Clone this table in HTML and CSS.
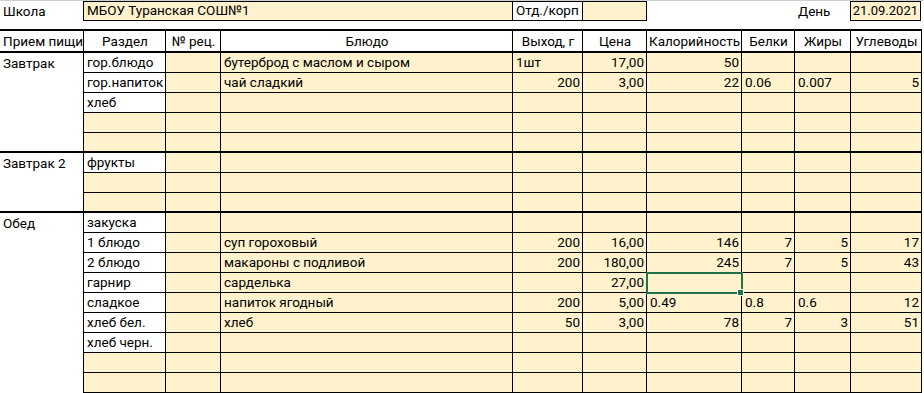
FILE: index.html
```html
<!DOCTYPE html>
<html lang="ru">
<head>
<meta charset="utf-8">
<title>Меню</title>
<link rel="stylesheet" href="styles.css">
</head>
<body>
<div class="sheet">
  <div class="toprow">
    <div class="c">Школа</div>
    <div class="c box tan span3">МБОУ Туранская СОШ№1</div>
    <div class="c box">Отд./корп</div>
    <div class="c box tan"></div>
    <div class="c"></div>
    <div class="c"></div>
    <div class="c">День</div>
    <div class="c box tan r date">21.09.2021</div>
  </div>
  <div class="gap"></div>
  <div class="grid">
    <div class="c hd">Прием пищи</div>
    <div class="c hd ctr">Раздел</div>
    <div class="c hd ctr">№ рец.</div>
    <div class="c hd ctr">Блюдо</div>
    <div class="c hd ctr">Выход, г</div>
    <div class="c hd ctr">Цена</div>
    <div class="c hd ctr">Калорийность</div>
    <div class="c hd ctr">Белки</div>
    <div class="c hd ctr">Жиры</div>
    <div class="c hd ctr last">Углеводы</div>

    <div class="c meal s5 top">Завтрак</div>
    <div class="c">гор.блюдо</div><div class="c tan"></div><div class="c tan">бутерброд с маслом и сыром</div><div class="c tan">1шт</div><div class="c tan r">17,00</div><div class="c tan r">50</div><div class="c tan"></div><div class="c tan"></div><div class="c tan last"></div>
    <div class="c">гор.напиток</div><div class="c tan"></div><div class="c tan">чай сладкий</div><div class="c tan r">200</div><div class="c tan r">3,00</div><div class="c tan r">22</div><div class="c tan">0.06</div><div class="c tan">0.007</div><div class="c tan r last">5</div>
    <div class="c">хлеб</div><div class="c tan"></div><div class="c tan"></div><div class="c tan"></div><div class="c tan"></div><div class="c tan"></div><div class="c tan"></div><div class="c tan"></div><div class="c tan last"></div>
    <div class="c tan"></div><div class="c tan"></div><div class="c tan"></div><div class="c tan"></div><div class="c tan"></div><div class="c tan"></div><div class="c tan"></div><div class="c tan"></div><div class="c tan last"></div>
    <div class="c tan e"></div><div class="c tan e"></div><div class="c tan e"></div><div class="c tan e"></div><div class="c tan e"></div><div class="c tan e"></div><div class="c tan e"></div><div class="c tan e"></div><div class="c tan e last"></div>

    <div class="c meal s3">Завтрак 2</div>
    <div class="c">фрукты</div><div class="c tan"></div><div class="c tan"></div><div class="c tan"></div><div class="c tan"></div><div class="c tan"></div><div class="c tan"></div><div class="c tan"></div><div class="c tan last"></div>
    <div class="c tan"></div><div class="c tan"></div><div class="c tan"></div><div class="c tan"></div><div class="c tan"></div><div class="c tan"></div><div class="c tan"></div><div class="c tan"></div><div class="c tan last"></div>
    <div class="c tan e"></div><div class="c tan e"></div><div class="c tan e"></div><div class="c tan e"></div><div class="c tan e"></div><div class="c tan e"></div><div class="c tan e"></div><div class="c tan e"></div><div class="c tan e last"></div>

    <div class="c meal s9">Обед</div>
    <div class="c">закуска</div><div class="c tan"></div><div class="c tan"></div><div class="c tan"></div><div class="c tan"></div><div class="c tan"></div><div class="c tan"></div><div class="c tan"></div><div class="c tan last"></div>
    <div class="c">1 блюдо</div><div class="c tan"></div><div class="c tan">суп гороховый</div><div class="c tan r">200</div><div class="c tan r">16,00</div><div class="c tan r">146</div><div class="c tan r">7</div><div class="c tan r">5</div><div class="c tan r last">17</div>
    <div class="c">2 блюдо</div><div class="c tan"></div><div class="c tan">макароны с подливой</div><div class="c tan r">200</div><div class="c tan r">180,00</div><div class="c tan r">245</div><div class="c tan r">7</div><div class="c tan r">5</div><div class="c tan r last">43</div>
    <div class="c">гарнир</div><div class="c tan"></div><div class="c tan">сарделька</div><div class="c tan"></div><div class="c tan r">27,00</div><div class="c tan sel"><span class="selbox"></span><span class="handle"></span></div><div class="c tan"></div><div class="c tan"></div><div class="c tan last"></div>
    <div class="c">сладкое</div><div class="c tan"></div><div class="c tan">напиток ягодный</div><div class="c tan r">200</div><div class="c tan r">5,00</div><div class="c tan">0.49</div><div class="c tan">0.8</div><div class="c tan">0.6</div><div class="c tan r last">12</div>
    <div class="c">хлеб бел.</div><div class="c tan"></div><div class="c tan">хлеб</div><div class="c tan r">50</div><div class="c tan r">3,00</div><div class="c tan r">78</div><div class="c tan r">7</div><div class="c tan r">3</div><div class="c tan r last">51</div>
    <div class="c">хлеб черн.</div><div class="c tan"></div><div class="c tan"></div><div class="c tan"></div><div class="c tan"></div><div class="c tan"></div><div class="c tan"></div><div class="c tan"></div><div class="c tan last"></div>
    <div class="c tan"></div><div class="c tan"></div><div class="c tan"></div><div class="c tan"></div><div class="c tan"></div><div class="c tan"></div><div class="c tan"></div><div class="c tan"></div><div class="c tan last"></div>
    <div class="c tan"></div><div class="c tan"></div><div class="c tan"></div><div class="c tan"></div><div class="c tan"></div><div class="c tan"></div><div class="c tan"></div><div class="c tan"></div><div class="c tan last"></div>
  </div>
</div>
</body>
</html>
```

FILE: styles.css
```css
* { box-sizing: border-box; }
html, body {
  margin: 0;
  padding: 0;
  background: #ffffff;
  overflow: hidden;
}
.sheet {
  width: 924px;
  height: 393px;
  overflow: hidden;
  font-family: Roboto, "Liberation Sans", sans-serif;
  font-size: 13.5px;
  color: #000;
  border-top: 1px solid #cfcfcf;
}
.toprow, .grid {
  display: grid;
  grid-template-columns: 84px 82px 55px 292px 70px 64px 95px 53px 56px 70px;
}
.toprow {
  height: 20px;
}
.toprow .c {
  border: none;
}
.toprow .box {
  border: 1px solid #000;
  margin-left: -1px;
}
.toprow .span3 {
  grid-column: span 3;
}
.toprow .date {
  padding-left: 0;
  padding-right: 2px;
  font-size: 13px;
}
.gap {
  height: 8px;
}
.grid {
  width: 922px;
  border-top: 2px solid #000;
  border-right: 2px solid #000;
  grid-template-rows: 22px;
  grid-auto-rows: 20px;
}
.c {
  display: flex;
  align-items: flex-end;
  padding: 0 2px 1px 3px;
  white-space: nowrap;
  overflow: hidden;
  line-height: 17px;
  border-right: 1px solid #000;
  border-bottom: 1px solid #000;
  background: #fff;
}
.c.last { border-right: none; }
.hd { border-bottom-width: 2px; padding-bottom: 1px; }
.tan { background: #fff2cc; }
.r { justify-content: flex-end; }
.ctr { justify-content: center; }
.e { border-bottom-width: 2px; }
.meal {
  align-items: flex-start;
  padding-top: 2px;
  border-bottom-width: 2px;
}
.s5 { grid-row: span 5; }
.s3 { grid-row: span 3; }
.s9 { grid-row: span 9; border-bottom: none; }
.sel {
  position: relative;
  overflow: visible;
}
.selbox {
  position: absolute;
  left: -1px;
  top: -1px;
  width: 97px;
  height: 22px;
  border: 2px solid #217346;
}
.handle {
  position: absolute;
  right: -3px;
  bottom: -4px;
  width: 7px;
  height: 7px;
  background: #217346;
  border: 1px solid #fff;
  z-index: 2;
}
```
